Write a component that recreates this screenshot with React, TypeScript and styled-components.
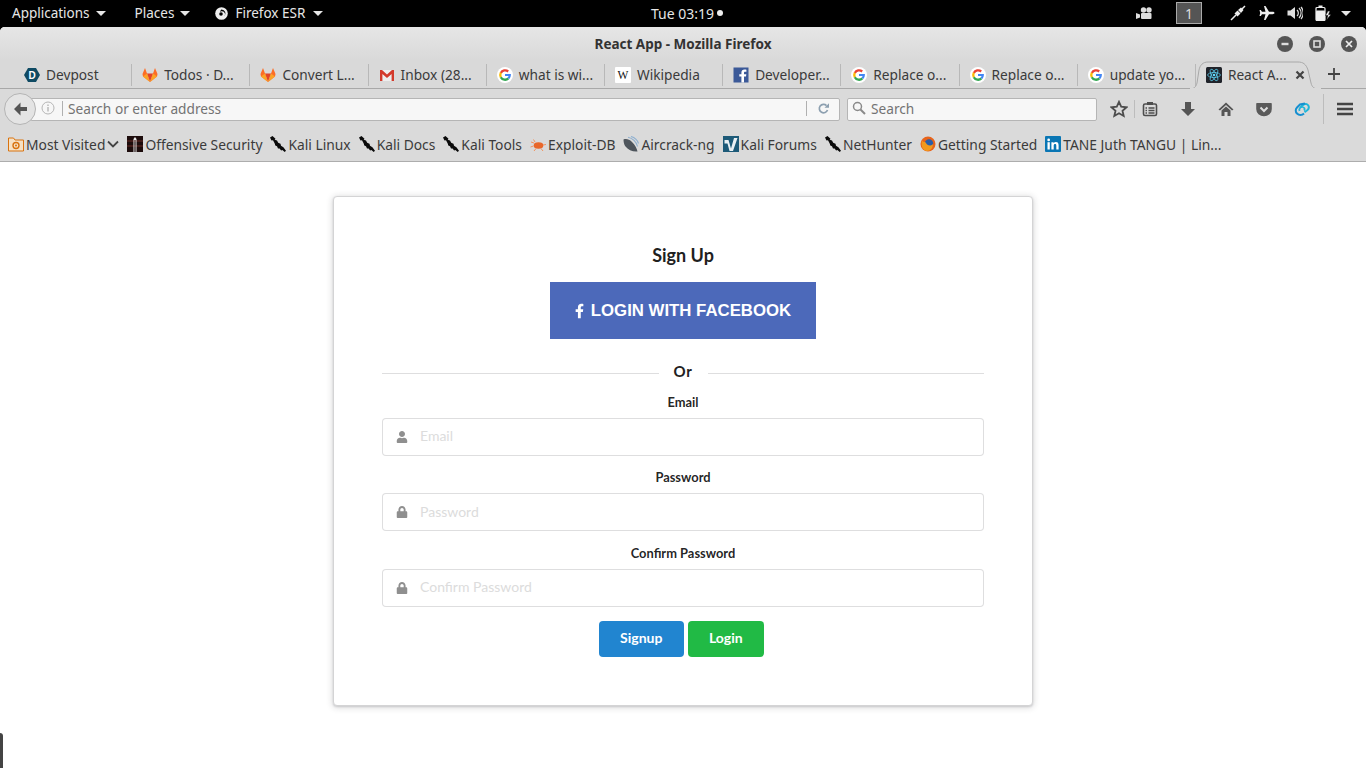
import React from "react";
import styled, { createGlobalStyle } from "styled-components";
import { FaFacebookF, FaLock, FaUser } from "react-icons/fa";

const GlobalStyle = createGlobalStyle`
  html, body {
    margin: 0;
    padding: 0;
    height: 768px;
    overflow: hidden;
    background: #000;
  }
  * { box-sizing: border-box; }
`;

const chromeFont = `"Noto Sans", "Open Sans", sans-serif`;
const pageFont = `Lato, "Helvetica Neue", Arial, sans-serif`;

const Desktop = styled.div`
  width: 1366px;
  height: 768px;
  display: flex;
  flex-direction: column;
  position: relative;
  font-family: ${chromeFont};
`;

const TopBar = styled.div`
  height: 27px;
  flex-shrink: 0;
  background: #000;
  color: #e6e6e6;
  font-size: 13.5px;
  padding-bottom: 1px;
  display: grid;
  grid-template-columns: 1fr auto 1fr;
  align-items: center;
`;

const TopGroup = styled.div<{ $end?: boolean }>`
  display: flex;
  align-items: center;
  justify-content: ${(p) => (p.$end ? "flex-end" : "flex-start")};
`;

const TopItem = styled.div<{ $left: number }>`
  display: flex;
  align-items: center;
  margin-left: ${(p) => p.$left}px;
  white-space: nowrap;
`;

const AppName = styled.span`
  margin-left: 7px;
`;

const Caret = styled.span<{ $gap?: number; $right?: number }>`
  width: 0;
  height: 0;
  margin-left: ${(p) => p.$gap ?? 6}px;
  margin-right: ${(p) => p.$right ?? 0}px;
  border-left: 5px solid transparent;
  border-right: 5px solid transparent;
  border-top: 5px solid #e6e6e6;
`;

const Clock = styled.div`
  display: flex;
  align-items: center;
  gap: 3px;
  padding-left: 8px;
  font-size: 14px;
`;

const ClockDot = styled.span`
  width: 6px;
  height: 6px;
  border-radius: 50%;
  background: #eee;
`;

const WorkspaceBox = styled.div`
  width: 26px;
  height: 22px;
  background: #555;
  border: 1px solid #aaa;
  color: #ddd;
  font-size: 14px;
  display: flex;
  align-items: center;
  justify-content: center;
  margin-left: 24px;
`;

const Tray = styled.span<{ $left: number }>`
  display: flex;
  margin-left: ${(p) => p.$left}px;
`;

const Browser = styled.div`
  flex: 1;
  display: flex;
  flex-direction: column;
  min-height: 0;
  background: #fff;
  border-radius: 5px 5px 0 0;
  overflow: hidden;
`;

const Chrome = styled.div`
  flex-shrink: 0;
  background: #dadada;
  color: #3b3b3b;
  font-size: 13.7px;
  border-bottom: 1px solid #adadad;
`;

const TitleRow = styled.div`
  height: 33px;
  background: linear-gradient(#e6e6e6, #d9d9d9);
  display: grid;
  grid-template-columns: 1fr auto 1fr;
  align-items: center;
`;

const WindowTitle = styled.div`
  font-weight: 700;
  font-size: 13.5px;
  color: #333;
`;

const WindowButtons = styled.div`
  display: flex;
  justify-content: flex-end;
  gap: 16px;
  padding-right: 9px;
`;

const WindowButton = styled.span`
  width: 16px;
  height: 16px;
  border-radius: 50%;
  background: #555;
  display: flex;
  align-items: center;
  justify-content: center;
`;

const TabStrip = styled.div`
  height: 29px;
  display: flex;
  padding-left: 14px;
  background: #d9d9d9;
  border-bottom: 1px solid #a8a8a8;
`;

const Tab = styled.div<{ $active?: boolean }>`
  position: relative;
  width: 118.2px;
  height: ${(p) => (p.$active ? "29px" : "28px")};
  flex-shrink: 0;
  display: flex;
  align-items: center;
  gap: 6px;
  padding-left: 10px;
  padding-top: ${(p) => (p.$active ? 0 : 1)}px;
  white-space: nowrap;
  &::after {
    content: "";
    display: ${(p) => (p.$active ? "none" : "block")};
    position: absolute;
    right: 0;
    top: 4px;
    bottom: 2px;
    width: 1px;
    background: #b8b8b8;
  }
`;

const TabShape = styled.svg`
  position: absolute;
  left: -7px;
  top: 0;
`;

const TabLabel = styled.span`
  position: relative;
`;

const TabIconSlot = styled.span`
  position: relative;
  display: flex;
  width: 16px;
  height: 16px;
`;

const TabClose = styled.span`
  position: absolute;
  left: 99px;
  top: 10px;
  display: flex;
`;

const NewTab = styled.span`
  margin-left: 13px;
  display: flex;
  align-items: center;
`;

const NavRow = styled.div`
  height: 40px;
  display: flex;
  align-items: center;
  padding-left: 4px;
`;

const BackButton = styled.div`
  position: relative;
  z-index: 1;
  width: 32px;
  height: 32px;
  border-radius: 50%;
  border: 1px solid #b4b4b4;
  background: #e4e4e4;
  display: flex;
  align-items: center;
  justify-content: center;
  flex-shrink: 0;
`;

const Field = styled.div<{ $width: number; $left: number }>`
  width: ${(p) => p.$width}px;
  margin-left: ${(p) => p.$left}px;
  height: 23px;
  padding-bottom: 2px;
  background: #f7f7f7;
  border: 1px solid #b5b5b5;
  border-radius: 2px;
  display: flex;
  align-items: center;
  color: #737373;
  font-size: 13.7px;
  flex-shrink: 0;
`;

const InfoSlot = styled.span`
  display: flex;
  margin-left: 10px;
  padding-right: 7px;
  height: 15px;
  border-right: 1px solid #b0b0b0;
  margin-right: 5px;
`;

const Grow = styled.span`
  flex: 1;
`;

const ReloadSlot = styled.span`
  display: flex;
  align-items: center;
  justify-content: center;
  width: 33px;
  height: 15px;
  border-left: 1px solid #b0b0b0;
`;

const SearchSlot = styled.span`
  display: flex;
  margin: 0 5px 0 4px;
`;

const ToolSlot = styled.span<{ $left: number }>`
  display: flex;
  margin-left: ${(p) => p.$left}px;
`;

const ToolDivider = styled.span<{ $left: number; $height: number }>`
  width: 1px;
  height: ${(p) => p.$height}px;
  background: #bcbcbc;
  margin-left: ${(p) => p.$left}px;
`;

const BookmarkRow = styled.div`
  height: 32px;
  display: flex;
  align-items: center;
  padding-left: 8px;
  padding-bottom: 2px;
  font-size: 13.82px;
  white-space: nowrap;
`;

const Bookmark = styled.div<{ $left: number }>`
  display: flex;
  align-items: center;
  gap: 2px;
  margin-left: ${(p) => p.$left}px;
`;

const PageArea = styled.main`
  flex: 1;
  background: #fff;
  display: flex;
  flex-direction: column;
  align-items: center;
  padding-top: 34px;
  font-family: ${pageFont};
  font-size: 14px;
  color: rgba(0, 0, 0, 0.87);
`;

const Card = styled.section`
  width: 700px;
  height: 510px;
  background: #fff;
  border: 1px solid #d4d4d5;
  border-radius: 4px;
  box-shadow: 0 1px 2px 0 rgba(34, 36, 38, 0.15), 0 1px 6px 1px rgba(34, 36, 38, 0.15);
  padding: 45px 48px 0;
  display: flex;
  flex-direction: column;
  align-items: center;
`;

const Heading = styled.h3`
  margin: 0 0 14px;
  font-size: 18px;
  line-height: 26px;
  font-weight: 700;
  color: #1f1f1f;
`;

const FacebookButton = styled.button`
  width: 266px;
  height: 57px;
  border: 0;
  background: #4c69ba;
  color: #fff;
  font-family: "Liberation Sans", Arial, sans-serif;
  font-size: 16.8px;
  font-weight: 700;
  text-transform: uppercase;
  display: flex;
  align-items: center;
  justify-content: center;
  gap: 7px;
`;

const FacebookGlyph = styled(FaFacebookF)`
  width: 9px;
  height: 16px;
`;

const Divider = styled.div`
  width: 100%;
  margin-top: 22px;
  display: flex;
  align-items: center;
  gap: 15px;
  font-weight: 700;
  font-size: 15px;
  line-height: 20px;
  letter-spacing: 0.7px;
  color: #222;
  &::before, &::after {
    content: "";
    flex: 1;
    height: 1px;
    margin-top: 5px;
    background: rgba(34, 36, 38, 0.15);
  }
`;

const FormField = styled.div`
  width: 100%;
  margin-top: 12.5px;
  display: flex;
  flex-direction: column;
  align-items: center;
  ${Divider} + & { margin-top: 11.5px; }
`;

const FieldLabel = styled.label`
  font-size: 12.88px;
  font-weight: 700;
  line-height: 18px;
  color: rgba(0, 0, 0, 0.87);
  margin-bottom: 7px;
`;

const InputWrap = styled.div`
  position: relative;
  width: 100%;
`;

const InputIcon = styled.span`
  position: absolute;
  left: 14px;
  top: 0;
  height: 100%;
  display: flex;
  align-items: center;
  color: #8f8f8f;
  font-size: 12px;
`;

const TextInput = styled.input`
  width: 100%;
  height: 38px;
  padding: 0 14px 2px 37px;
  border: 1px solid rgba(34, 36, 38, 0.15);
  border-radius: 4px;
  font-family: ${pageFont};
  font-size: 14px;
  outline: none;
  &::placeholder { color: #dcdcdc; opacity: 1; }
`;

const ButtonRow = styled.div`
  margin-top: 14px;
  display: flex;
  gap: 4px;
  padding-right: 3.5px;
`;

const ActionButton = styled.button<{ $color: string; $width: number }>`
  width: ${(p) => p.$width}px;
  height: 36px;
  padding-bottom: 3px;
  border: 0;
  border-radius: 4px;
  background: ${(p) => p.$color};
  color: #fff;
  font-family: ${pageFont};
  font-size: 14px;
  font-weight: 700;
`;

const CornerSliver = styled.div`
  position: absolute;
  left: 0;
  bottom: 0;
  width: 3px;
  height: 35px;
  background: #444;
  border-top-right-radius: 3px;
`;

const Ic = ({ s = 16, children, vb }: { s?: number; vb?: string; children: React.ReactNode }) => (
  <svg width={s} height={s} viewBox={vb ?? "0 0 16 16"}>
    {children}
  </svg>
);

const Google = () => (
  <Ic>
    <circle cx="8" cy="8" r="8" fill="#fff" />
    <path d="M3.800 6A4.800 4.800 0 0 1 11.200 4.500" stroke="#ea4335" strokeWidth="2.300" fill="none" />
    <path d="M3.800 5.800a4.800 4.800 0 0 0 0 4.400" stroke="#fbbc05" strokeWidth="2.300" fill="none" />
    <path d="M3.800 10.200A4.800 4.800 0 0 0 11.400 11.400" stroke="#34a853" strokeWidth="2.300" fill="none" />
    <path d="M11.400 11.400A4.800 4.800 0 0 0 12.800 8H8" stroke="#4285f4" strokeWidth="2.200" fill="none" />
  </Ic>
);

const GitLab = () => (
  <Ic>
    <polygon points="8,15 1,9.500 0.500,7 3,1 5,6.500" fill="#fc6d26" />
    <polygon points="8,15 15,9.500 15.500,7 13,1 11,6.500" fill="#fc6d26" />
    <polygon points="8,15 5,6.500 11,6.500" fill="#e24329" />
    <polygon points="8,15 1,9.500 5,6.500" fill="#fca326" />
    <polygon points="8,15 15,9.500 11,6.500" fill="#fca326" />
  </Ic>
);

const Devpost = () => (
  <Ic>
    <polygon points="4,1 12,1 16,8 12,15 4,15 0,8" fill="#0f4a63" />
    <text x="8" y="11.600" textAnchor="middle" fontSize="10" fontWeight="700" fontFamily="Liberation Sans" fill="#fff">D</text>
  </Ic>
);

const Gmail = () => (
  <Ic>
    <rect x="1" y="3" width="14" height="11" fill="#eee" />
    <path d="M1 14V3h2l5 4.600L13 3h2v11h-2.400V7L8 11 3.400 7v7z" fill="#d33a2c" />
  </Ic>
);

const Wikipedia = () => (
  <Ic>
    <rect width="16" height="16" rx="1" fill="#fff" />
    <text x="8" y="12" textAnchor="middle" fontSize="11.500" fontFamily="Liberation Serif" fill="#111">W</text>
  </Ic>
);

const FacebookSquare = () => (
  <Ic>
    <rect width="15" height="15" x="0.500" y="0.500" fill="#3b5998" />
    <path d="M11 15.500V9.600h2l.3-2.300H11V5.900c0-.7.200-1.100 1.100-1.100h1.300V2.700c-.3 0-1-.1-1.900-.1-1.900 0-3.100 1.100-3.100 3.200v1.500H6.300v2.300h2.100v5.900z" fill="#fff" />
  </Ic>
);

const ReactMark = () => (
  <Ic>
    <rect width="16" height="16" rx="1.500" fill="#20232a" />
    <circle cx="8" cy="8" r="1.300" fill="#61dafb" />
    <g fill="none" stroke="#61dafb" strokeWidth="0.700">
      <ellipse cx="8" cy="8" rx="6.400" ry="2.500" />
      <ellipse cx="8" cy="8" rx="6.400" ry="2.500" transform="rotate(60 8 8)" />
      <ellipse cx="8" cy="8" rx="6.400" ry="2.500" transform="rotate(120 8 8)" />
    </g>
  </Ic>
);

const KaliDragon = () => (
  <Ic>
    <path d="M0 1.500 2.500 0l3 2.800-.8 1 2.300.7 1.200 2.300 2.300.9.500 2 2.400 1.500 2.600 3.600-1.300 1.200-2.300-2-1.300.4-1.500-1.800-1.600-.2-1-2.200-1.700-.8-.6-2L3 4.300 1.500 4.500z" fill="#0a0a0a" />
  </Ic>
);

const FolderIcon = () => (
  <Ic>
    <path d="M0.500 2h5l1.500 2h8.500v11H.5z" fill="#f6e1c4" stroke="#d9730f" />
    <circle cx="8" cy="9.500" r="3" fill="none" stroke="#d9730f" strokeWidth="1.400" />
    <circle cx="8" cy="9.500" r="1" fill="#d9730f" />
  </Ic>
);

const OffSec = () => (
  <Ic>
    <rect width="16" height="16" fill="#1d0c0c" />
    <path d="M0 5h16M0 10h16" stroke="#6a2a24" strokeWidth="1" />
    <path d="M6.500 16V3l1.500-2 1.500 2v13H8.600V4H7.400v12z" fill="#eee" />
  </Ic>
);

const ExploitDb = () => (
  <Ic>
    <ellipse cx="8.500" cy="9.500" rx="4.800" ry="3.200" fill="#e8672a" />
    <path d="M4 7 1 6M3.500 10 0.500 11M6 12.500 4 15M11 12.500 13 15M13 9 16 8.500M5 6 3.500 3.500" stroke="#f0935f" strokeWidth="1" fill="none" />
  </Ic>
);

const Aircrack = () => (
  <Ic>
    <path d="M0.500 3.500C3 2.500 6 3 9 6s5 6.500 5.500 9.500C10 16 5 14 2.500 10.500 1 8.500.5 6 .5 3.500z" fill="#4e555c" />
    <path d="M5 1.200c4.500.8 8.500 4.700 9.500 9.300M8 .500c3.500 1 6.500 3.800 7.500 7" stroke="#8fb0d0" strokeWidth="1.100" fill="none" />
  </Ic>
);

const KaliForums = () => (
  <Ic>
    <rect width="16" height="16" fill="#1d5a78" />
    <path d="M1.500 4h4l2.500 8.500L11 2h3.500L10 15H6.500L4.500 7.500h-3z" fill="#e9f0f4" />
  </Ic>
);

const FirefoxMark = () => (
  <Ic>
    <circle cx="8" cy="8" r="7.500" fill="#e8641b" />
    <circle cx="9" cy="7.500" r="4.200" fill="#2b5ea8" />
    <path d="M2 4c1 3 3 1 4 3s4 4 7 1c0 4-2.500 7-6 7S.5 11 2 4z" fill="#f29a1d" />
  </Ic>
);

const LinkedIn = () => (
  <Ic>
    <rect width="16" height="16" rx="1" fill="#0a76b4" />
    <rect x="2.500" y="6.200" width="2.300" height="7.300" fill="#fff" />
    <circle cx="3.650" cy="3.900" r="1.350" fill="#fff" />
    <path d="M6.400 6.200h2.200v1c.5-.8 1.300-1.200 2.300-1.200 2 0 2.700 1.200 2.700 3.300v4.200h-2.300V9.800c0-1-.3-1.700-1.200-1.700-1 0-1.400.7-1.400 1.700v3.700H6.400z" fill="#fff" />
  </Ic>
);

const tabs: { label: string; icon: React.ReactNode }[] = [
  { label: "Devpost", icon: <Devpost /> },
  { label: "Todos · D...", icon: <GitLab /> },
  { label: "Convert L...", icon: <GitLab /> },
  { label: "Inbox (28...", icon: <Gmail /> },
  { label: "what is wi...", icon: <Google /> },
  { label: "Wikipedia", icon: <Wikipedia /> },
  { label: "Developer...", icon: <FacebookSquare /> },
  { label: "Replace o...", icon: <Google /> },
  { label: "Replace o...", icon: <Google /> },
  { label: "update yo...", icon: <Google /> },
];

const bookmarks: { label: string; icon: React.ReactNode; left: number }[] = [
  { label: "Offensive Security", icon: <OffSec />, left: 8 },
  { label: "Kali Linux", icon: <KaliDragon />, left: 8 },
  { label: "Kali Docs", icon: <KaliDragon />, left: 8 },
  { label: "Kali Tools", icon: <KaliDragon />, left: 8 },
  { label: "Exploit-DB", icon: <ExploitDb />, left: 8 },
  { label: "Aircrack-ng", icon: <Aircrack />, left: 8 },
  { label: "Kali Forums", icon: <KaliForums />, left: 8 },
  { label: "NetHunter", icon: <KaliDragon />, left: 8 },
  { label: "Getting Started", icon: <FirefoxMark />, left: 8 },
  { label: "TANE Juth TANGU | Lin...", icon: <LinkedIn />, left: 8 },
];

const fields = [
  { label: "Email", icon: <FaUser />, type: "text" },
  { label: "Password", icon: <FaLock />, type: "password" },
  { label: "Confirm Password", icon: <FaLock />, type: "password" },
];

const App: React.FC = () => (
  <Desktop>
    <GlobalStyle />
    <TopBar>
      <TopGroup>
        <TopItem $left={12}>
          Applications
          <Caret />
        </TopItem>
        <TopItem $left={29}>
          Places
          <Caret />
        </TopItem>
        <TopItem $left={25}>
          <Ic s={13} vb="0 0 13 13">
            <circle cx="6.500" cy="6.500" r="6.300" fill="#eee" />
            <path d="M6.500 2.500a4 4 0 0 1 2.600 7 3 3 0 0 0-2-5.200c-1 0-1.500.4-2 .7.300-1.400 1-2.500 1.400-2.500z" fill="#000" />
            <circle cx="6" cy="7" r="1.800" fill="#000" />
          </Ic>
          <AppName>Firefox ESR</AppName>
          <Caret $gap={8} />
        </TopItem>
      </TopGroup>
      <Clock>
        Tue 03:19
        <ClockDot />
      </Clock>
      <TopGroup $end>
        <Ic>
          <circle cx="7.500" cy="5" r="2.700" fill="#ddd" />
          <circle cx="13" cy="5" r="2.700" fill="#ddd" />
          <rect x="5" y="8" width="10.500" height="6" rx="1" fill="#ddd" />
          <polygon points="0,8 4,9.500 4,12.500 0,14" fill="#ddd" />
        </Ic>
        <WorkspaceBox>1</WorkspaceBox>
        <Tray $left={28}>
          <Ic>
            <path d="M1 15 6 10M10 6l5-5" stroke="#eee" strokeWidth="1.500" />
            <path d="M4.500 8.500 7.500 5.500 10.500 8.500 7.500 11.500z" fill="#eee" />
            <path d="M8 5 11 2.500 13.500 5 11 8z" fill="#eee" />
          </Ic>
        </Tray>
        <Tray $left={13}>
          <Ic>
            <path d="M15.500 8c0-.7-1-1.200-2-1.200H10L6.500 1H5l1.500 5.800H3L1.800 5H.5l.7 3-.7 3h1.300L3 9.200h3.500L5 15h1.500L10 9.200h3.500c1 0 2-.5 2-1.200z" fill="#eee" />
          </Ic>
        </Tray>
        <Tray $left={12}>
          <Ic>
            <path d="M0.500 5.500h3L8 2v12L3.500 10.500h-3z" fill="#ddd" />
            <path d="M10 5a4 4 0 0 1 0 6M12 3a7 7 0 0 1 0 10M14 2a9 9 0 0 1 0 12" stroke="#ddd" strokeWidth="1.200" fill="none" />
          </Ic>
        </Tray>
        <Tray $left={12}>
          <Ic>
            <rect x="3.500" y="0.500" width="4" height="2.500" fill="#eee" />
            <rect x="1" y="2.500" width="9" height="13" rx="1" fill="none" stroke="#eee" strokeWidth="1.200" />
            <rect x="1" y="5.500" width="9" height="10" rx="1" fill="#eee" />
            <path d="M13 6 10.500 10.500H13L11.500 15 16 9.500h-2.500L15 6z" fill="#eee" stroke="#000" strokeWidth="0.500" />
          </Ic>
        </Tray>
        <Caret $gap={10} $right={15} />
      </TopGroup>
    </TopBar>

    <Browser>
      <Chrome>
        <TitleRow>
          <span />
          <WindowTitle>React App - Mozilla Firefox</WindowTitle>
          <WindowButtons>
            <WindowButton>
              <Ic s={10} vb="0 0 10 10">
                <rect x="1.500" y="3.800" width="7" height="2.400" fill="#ddd" />
              </Ic>
            </WindowButton>
            <WindowButton>
              <Ic s={10} vb="0 0 10 10">
                <rect x="2" y="2" width="6" height="6" fill="none" stroke="#ddd" strokeWidth="1.600" />
              </Ic>
            </WindowButton>
            <WindowButton>
              <Ic s={10} vb="0 0 10 10">
                <path d="M2 2 8 8M8 2 2 8" stroke="#eee" strokeWidth="1.700" />
              </Ic>
            </WindowButton>
          </WindowButtons>
        </TitleRow>

        <TabStrip>
          {tabs.map((tab, i) => (
            <Tab key={i}>
              <TabIconSlot>{tab.icon}</TabIconSlot>
              {tab.label}
            </Tab>
          ))}
          <Tab $active>
            <TabShape width="134" height="29" viewBox="0 0 134 29">
              <path
                d="M0 29c5 0 7-2 8-6l2-13c1-5 4-8 9-8h90c5 0 8 2 10 8l3 13c1 4 3 6 8 6z"
                fill="#dadada"
                stroke="#a8a8a8"
              />
              <path d="M1 28.500h131" stroke="#dadada" />
            </TabShape>
            <TabIconSlot>
              <ReactMark />
            </TabIconSlot>
            <TabLabel>React A...</TabLabel>
            <TabClose>
              <Ic s={10} vb="0 0 10 10">
                <path d="M1.500 1.500 8.500 8.500M8.500 1.500 1.500 8.500" stroke="#444" strokeWidth="2.200" />
              </Ic>
            </TabClose>
          </Tab>
          <NewTab>
            <Ic s={14} vb="0 0 14 14">
              <path d="M7 1v12M1 7h12" stroke="#444" strokeWidth="1.800" />
            </Ic>
          </NewTab>
        </TabStrip>

        <NavRow>
          <BackButton>
            <Ic s={18} vb="0 0 18 18">
              <path d="M9.500 2.500 3 9l6.500 6.500V11H16V7H9.500z" fill="#555" />
            </Ic>
          </BackButton>
          <Field $width={810} $left={-6}>
            <InfoSlot>
              <Ic s={14} vb="0 0 14 14">
                <circle cx="7" cy="7" r="6" fill="none" stroke="#b5b5b5" />
                <path d="M7 6v4.500M7 3.500v1.500" stroke="#b5b5b5" strokeWidth="1.400" />
              </Ic>
            </InfoSlot>
            Search or enter address
            <Grow />
            <ReloadSlot>
              <Ic s={13} vb="0 0 13 13">
                <path d="M10.500 8a4.200 4.200 0 1 1-1-4.400" fill="none" stroke="#8da0b0" strokeWidth="1.700" />
                <polygon points="7.500,5.800 12,5.800 12,1.200" fill="#8da0b0" />
              </Ic>
            </ReloadSlot>
          </Field>
          <Field $width={250} $left={7}>
            <SearchSlot>
              <Ic s={14} vb="0 0 14 14">
                <circle cx="5.500" cy="5.500" r="4" fill="none" stroke="#8a8a8a" strokeWidth="1.500" />
                <path d="M8.500 8.500 13 13" stroke="#8a8a8a" strokeWidth="2" />
              </Ic>
            </SearchSlot>
            Search
          </Field>
          <ToolSlot $left={13}>
            <Ic s={18} vb="0 0 18 18">
              <polygon points="9,1.800 11.200,6.700 16.500,7.300 12.500,10.800 13.700,16 9,13.300 4.300,16 5.500,10.800 1.500,7.300 6.800,6.700" fill="none" stroke="#4d4d4d" strokeWidth="1.800" />
            </Ic>
          </ToolSlot>
          <ToolDivider $left={6} $height={18} />
          <ToolSlot $left={7}>
            <Ic>
              <rect x="1.500" y="3" width="13" height="11.500" rx="1.500" fill="none" stroke="#4d4d4d" strokeWidth="1.600" />
              <rect x="5" y="1" width="6" height="3" fill="#4d4d4d" />
              <path d="M3.500 7H5M6.500 7h6M3.500 9.500H5M6.500 9.500h6M3.500 12H5M6.500 12h6" stroke="#4d4d4d" strokeWidth="1.300" />
            </Ic>
          </ToolSlot>
          <ToolSlot $left={22}>
            <Ic>
              <path d="M5 1h6v7h4l-7 7-7-7h4z" fill="#555" />
            </Ic>
          </ToolSlot>
          <ToolSlot $left={22}>
            <Ic>
              <path d="M8 1.500 .5 8.500 2 9.500 8 4l6 5.500 1.500-1z" fill="#555" />
              <path d="M3.500 9.500 8 5.500l4.500 4V15H9.500v-4h-3v4h-3z" fill="#555" />
            </Ic>
          </ToolSlot>
          <ToolSlot $left={22}>
            <Ic>
              <path d="M1 2h14a.8.8 0 0 1 .8.8V8a7.800 7.300 0 0 1-15.600 0V2.800A.8.8 0 0 1 1 2z" fill="#5a5a5a" />
              <path d="M4.500 6.500 8 10l3.500-3.500" fill="none" stroke="#ddd" strokeWidth="2" />
            </Ic>
          </ToolSlot>
          <ToolSlot $left={22}>
            <Ic>
              <path d="M6.500 6.500c.8-1.600 2.200-2.500 3.500-3.200 1.800-.9 3.800 0 4.500 1.600.7 1.600 0 3.300-1.300 4.400l-2.700 2" fill="none" stroke="#20b5d8" strokeWidth="2" />
              <path d="M11 2.500 6 3.500 3 6.500a4.200 4.200 0 0 0 0 6c2 2 5 2 7 0" fill="none" stroke="#158fd0" strokeWidth="2" />
              <path d="M5.500 10c-.8-2 1-4.500 3-4s2.800 2.200 1.500 3.500" fill="none" stroke="#20b5d8" strokeWidth="1.800" />
            </Ic>
          </ToolSlot>
          <ToolDivider $left={13} $height={30} />
          <ToolSlot $left={13}>
            <Ic>
              <path d="M0 3h16M0 8h16M0 13h16" stroke="#444" strokeWidth="2.400" />
            </Ic>
          </ToolSlot>
        </NavRow>

        <BookmarkRow>
          <Bookmark $left={0}>
            <FolderIcon />
            Most Visited
            <Ic s={12} vb="0 0 12 12">
              <path d="M1 3.500 6 8.500l5-5" fill="none" stroke="#444" strokeWidth="1.800" />
            </Ic>
          </Bookmark>
          {bookmarks.map((b) => (
            <Bookmark key={b.label} $left={b.left}>
              {b.icon}
              {b.label}
            </Bookmark>
          ))}
        </BookmarkRow>
      </Chrome>

      <PageArea>
        <Card>
          <Heading>Sign Up</Heading>
          <FacebookButton>
            <FacebookGlyph />
            Login with Facebook
          </FacebookButton>
          <Divider>Or</Divider>
          {fields.map((f) => (
            <FormField key={f.label}>
              <FieldLabel>{f.label}</FieldLabel>
              <InputWrap>
                <InputIcon>{f.icon}</InputIcon>
                <TextInput type={f.type} placeholder={f.label} />
              </InputWrap>
            </FormField>
          ))}
          <ButtonRow>
            <ActionButton $color="#2185d0" $width={85}>Signup</ActionButton>
            <ActionButton $color="#21ba45" $width={76}>Login</ActionButton>
          </ButtonRow>
        </Card>
      </PageArea>
    </Browser>
    <CornerSliver />
  </Desktop>
);

export default App;
